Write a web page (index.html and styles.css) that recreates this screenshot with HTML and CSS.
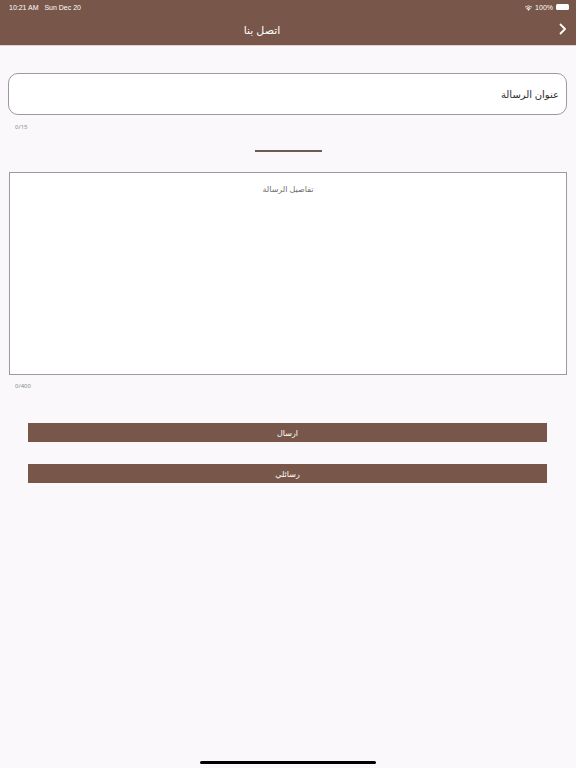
FILE: index.html
```html
<!DOCTYPE html>
<html lang="ar">

<head>
    <meta charset="UTF-8">
    <title>اتصل بنا</title>
    <link rel="stylesheet" href="styles.css">
</head>

<body>
    <div class="topbar">
        <div class="status">
            <span class="status_left">10:21 AM&nbsp;&nbsp;&nbsp;Sun Dec 20</span>
            <span class="status_right">
                <svg class="wifi" width="9" height="7" viewBox="0 0 18 14">
                    <path d="M9 13.5 L6.3 10.6 A4 4 0 0 1 11.7 10.6 Z" fill="#fff"/>
                    <path d="M4.4 8.6 A6.6 6.6 0 0 1 13.6 8.6 L12.2 10 A4.6 4.6 0 0 0 5.8 10 Z" fill="#fff"/>
                    <path d="M1.6 5.8 A10.6 10.6 0 0 1 16.4 5.8 L15 7.2 A8.6 8.6 0 0 0 3 7.2 Z" fill="#fff"/>
                </svg>
                100%
                <span class="battery"><span class="battery_fill"></span></span>
            </span>
        </div>
        <div class="nav">
            <span class="nav_title">اتصل بنا</span>
            <svg class="nav_back" width="8" height="12" viewBox="0 0 8 12">
                <path d="M1.5 1.5 L6 6 L1.5 10.5" stroke="#fff" stroke-width="1.8" fill="none" stroke-linecap="round" stroke-linejoin="round"/>
            </svg>
        </div>
    </div>

    <div class="content">
        <div class="field">عنوان الرسالة</div>
        <div class="counter">0/15</div>

        <div class="divider"></div>

        <div class="details">
            <span class="placeholder">تفاصيل الرسالة</span>
        </div>
        <div class="counter">0/400</div>

        <div class="buttons">
            <div class="btn">ارسال</div>
            <div class="btn">رسائلي</div>
        </div>
    </div>

    <div class="home_bar"></div>
</body>

</html>
```
FILE: styles.css
```css
* {
    margin: 0;
    padding: 0;
    box-sizing: border-box;
}

body {
    background-color: #faf8fa;
    font-family: "Noto Sans", "DejaVu Sans", sans-serif;
    color: #333;
    height: 768px;
    overflow: hidden;
}

/* 顶部栏 */
.topbar {
    background-color: #79564a;
    height: 46px;
    border-bottom: 1px solid #ecd0d0;
    color: #fff;
}

.status {
    height: 14px;
    padding: 0 7px 0 9px;
    display: flex;
    justify-content: space-between;
    align-items: center;
    font-size: 7px;
    font-family: "Liberation Sans", sans-serif;
}

.status_right {
    display: flex;
    align-items: center;
    gap: 2px;
}

.battery {
    width: 13px;
    height: 6px;
    border-radius: 1.5px;
    background-color: #fff;
    margin-left: 1px;
}

.nav {
    height: 30px;
    display: flex;
    justify-content: center;
    align-items: center;
    position: relative;
}

.nav_title {
    font-size: 11px;
    margin-right: 52px;
}

.nav_back {
    position: absolute;
    right: 9px;
    top: 9px;
}

/* 表单 */
.content {
    padding: 0 9px 0 8px;
}

.field {
    margin-top: 27px;
    height: 42px;
    background-color: #fff;
    border: 1px solid #9c9a9c;
    border-radius: 10px;
    display: flex;
    align-items: center;
    justify-content: flex-end;
    padding-right: 7px;
    font-size: 10px;
    color: #2c2c2c;
}

.counter {
    font-size: 6px;
    color: #8a8a8a;
    padding-left: 7px;
    margin-top: 8px;
    height: 8px;
}

.divider {
    width: 67px;
    height: 2px;
    background-color: #6e5a50;
    margin: 19px auto 0;
    position: relative;
    left: 1px;
}

.details {
    margin-top: 20px;
    margin-left: 1px;
    height: 203px;
    background-color: #fff;
    border: 1px solid #9c9a9c;
    text-align: center;
    padding-top: 8px;
    line-height: 10px;
}

.placeholder {
    font-size: 8px;
    color: #707070;
}

.details + .counter {
    margin-top: 7px;
}

.buttons {
    margin: 33px 20px 0 20px;
    display: flex;
    flex-direction: column;
    gap: 22px;
}

.btn {
    height: 19px;
    background-color: #79564a;
    color: #fff;
    font-size: 8px;
    display: flex;
    justify-content: center;
    align-items: center;
}

.home_bar {
    position: fixed;
    left: 200px;
    bottom: 4px;
    width: 176px;
    height: 3px;
    border-radius: 2px;
    background-color: #000;
}
```
